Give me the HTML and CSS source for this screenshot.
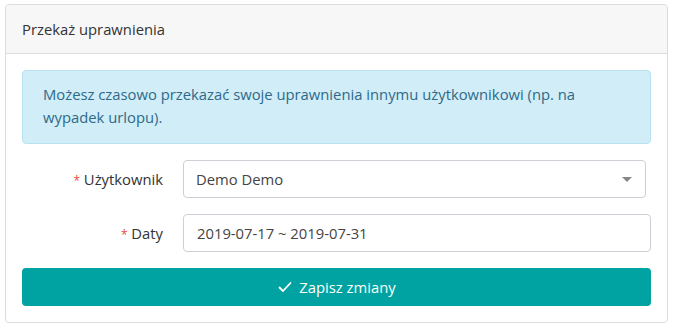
FILE: index.html
```html
<!DOCTYPE html>
<html lang="pl">
<head>
    <meta charset="UTF-8">
    <meta name="viewport" content="width=device-width, initial-scale=1.0">
    <title>Przekaż uprawnienia</title>
    <link rel="stylesheet" href="styles.css">
</head>
<body>
    <div class="card">
        <div class="card-header">Przekaż uprawnienia</div>
        <div class="card-body">
            <div class="alert">
                Możesz czasowo przekazać swoje uprawnienia innymu użytkownikowi (np. na wypadek urlopu).
            </div>

            <div class="form-row">
                <label class="form-label"><span class="required">*</span> Użytkownik</label>
                <div class="select-box">
                    <span>Demo Demo</span>
                    <span class="caret"></span>
                </div>
            </div>

            <div class="form-row">
                <label class="form-label"><span class="required">*</span> Daty</label>
                <div class="text-input">2019-07-17 ~ 2019-07-31</div>
            </div>

            <button class="btn-save">
                <svg width="16" height="16" viewBox="0 0 16 16">
                    <path d="M2.5 8.5 L6 12 L13.5 4" fill="none" stroke="#fff" stroke-width="1.8" stroke-linecap="round" stroke-linejoin="round"/>
                </svg>
                Zapisz zmiany
            </button>
        </div>
    </div>
</body>
</html>
```

FILE: styles.css
```css
body {
    font-family: "Open Sans", "Noto Sans", sans-serif;
    font-size: 14.8px;
    color: #333;
    margin: 0;
    padding: 4px 8px 0 5px;
    background: #fff;
}

.card {
    width: 661px;
    border: 1px solid #dcdcdc;
    border-radius: 4px;
    background: #fff;
}

.card-header {
    height: 48px;
    display: flex;
    align-items: center;
    padding: 0 16px;
    background-color: #f7f7f7;
    border-bottom: 1px solid #dcdcdc;
    border-radius: 4px 4px 0 0;
    color: #333;
}

.card-body {
    padding: 16px;
    display: flex;
    flex-direction: column;
    gap: 16px;
}

.alert {
    background-color: #d0edf8;
    border: 1px solid #b9e2f1;
    border-radius: 4px;
    color: #2e6a88;
    padding: 12px 20px 14px;
    line-height: 23px;
}

.form-row {
    display: flex;
    align-items: center;
    gap: 20px;
}

.form-row:first-of-type {
    margin-top: 1px;
}

.form-label {
    width: 141px;
    text-align: right;
    color: #333;
}

.required {
    color: #e74c3c;
    font-size: 12px;
}

.select-box,
.text-input {
    height: 36px;
    border: 1px solid #ccd0d6;
    border-radius: 4px;
    display: flex;
    align-items: center;
    padding: 0 12px;
    color: #444;
    box-sizing: content-box;
}

.select-box {
    width: 437px;
    justify-content: space-between;
}

.text-input {
    width: 441px;
    padding-left: 13px;
}

.caret {
    width: 0;
    height: 0;
    border-left: 5px solid transparent;
    border-right: 5px solid transparent;
    border-top: 5px solid #888;
    margin-right: 1px;
}

.btn-save {
    height: 38px;
    border: none;
    border-radius: 4px;
    background-color: #00a3a1;
    color: #fff;
    font-family: inherit;
    font-size: 14.8px;
    display: flex;
    align-items: center;
    justify-content: center;
    gap: 6px;
    cursor: pointer;
}
```
